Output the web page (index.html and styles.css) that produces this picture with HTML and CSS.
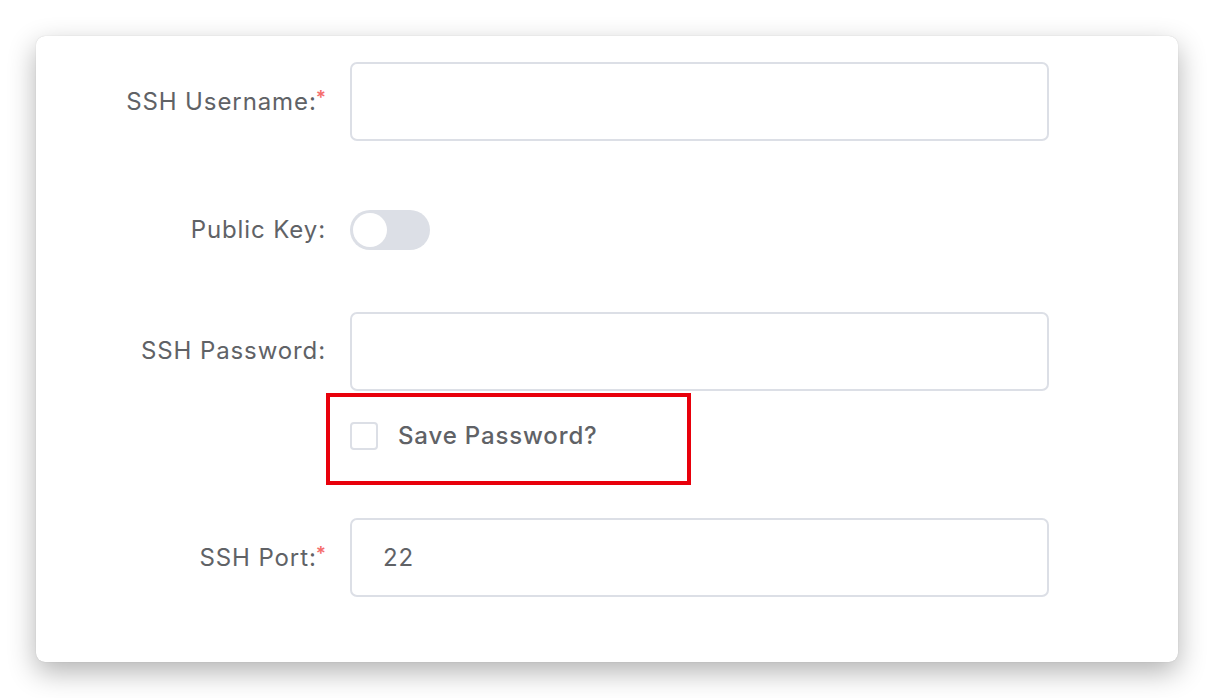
FILE: index.html
```html
<!DOCTYPE html>
<html>
<head>
<meta charset="utf-8">
<link rel="stylesheet" href="styles.css">
</head>
<body>
  <div class="card">
    <form class="form">
      <div class="row row-user">
        <label class="label">SSH Username:<span class="req">*</span></label>
        <div class="control"><input class="input" type="text"></div>
      </div>
      <div class="row row-key">
        <label class="label">Public Key:</label>
        <div class="control"><span class="switch"><span class="knob"></span></span></div>
      </div>
      <div class="row row-pass">
        <label class="label">SSH Password:</label>
        <div class="control"><input class="input" type="password"></div>
      </div>
      <div class="row row-save">
        <span class="label"></span>
        <div class="control check-row">
          <span class="checkbox"></span>
          <span class="check-text">Save Password?</span>
          <span class="highlight"></span>
        </div>
      </div>
      <div class="row row-port">
        <label class="label">SSH Port:<span class="req">*</span></label>
        <div class="control"><input class="input" type="text" value="22"></div>
      </div>
    </form>
  </div>
</body>
</html>
```

FILE: styles.css
```css
html, body {
  margin: 0;
  padding: 0;
  background: #ffffff;
}
body {
  font-family: "Inter", "Liberation Sans", sans-serif;
  color: #606266;
  overflow: hidden;
  height: 698px;
}
.card {
  margin: 36px 36px 0 36px;
  height: 626px;
  box-sizing: border-box;
  background: #fff;
  border-radius: 9px;
  box-shadow: 0 10px 28px rgba(0, 0, 0, 0.3), 0 0 1px rgba(0, 0, 0, 0.2);
  padding: 26px 129px 0 0;
}
.form {
  display: flex;
  flex-direction: column;
}
.row {
  display: grid;
  grid-template-columns: 314px 1fr;
  align-items: center;
}
.label {
  text-align: right;
  padding-right: 24px;
  font-size: 24px;
  color: #606266;
  letter-spacing: 0.9px;
  line-height: 1;
  margin-top: -1px;
}
.req {
  color: #f56c6c;
  font-size: 19px;
  font-weight: 600;
  vertical-align: 6px;
  margin-left: -1px;
  letter-spacing: 0;
}
.input {
  display: block;
  width: 100%;
  height: 79px;
  box-sizing: border-box;
  border: 2px solid #dcdfe6;
  border-radius: 7px;
  background: #fff;
  padding: 0 31px;
  font-family: "Inter", "Liberation Sans", sans-serif;
  font-size: 24px;
  letter-spacing: 0.9px;
  color: #606266;
  outline: none;
}
.row-key {
  margin-top: 49px;
  height: 80px;
}
.row-pass {
  margin-top: 42px;
}
.row-save {
  margin-top: 2px;
  height: 92px;
}
.row-port {
  margin-top: 33px;
}
.switch {
  display: block;
  width: 80px;
  height: 40px;
  border-radius: 20px;
  background: #dcdfe6;
  position: relative;
}
.knob {
  position: absolute;
  left: 3px;
  top: 3px;
  width: 34px;
  height: 34px;
  border-radius: 50%;
  background: #fff;
}
.check-row {
  position: relative;
  display: flex;
  align-items: center;
  height: 92px;
  gap: 20px;
}
.checkbox {
  width: 28px;
  height: 28px;
  box-sizing: border-box;
  border: 2px solid #dcdfe6;
  border-radius: 4px;
  background: #fff;
  margin-top: -6px;
}
.check-text {
  font-size: 24px;
  font-weight: 500;
  letter-spacing: 0.85px;
  color: #606266;
  margin-top: -8px;
}
.highlight {
  position: absolute;
  left: -24px;
  top: 0;
  width: 365px;
  height: 92px;
  box-sizing: border-box;
  border: 4px solid #e8000b;
}
```
